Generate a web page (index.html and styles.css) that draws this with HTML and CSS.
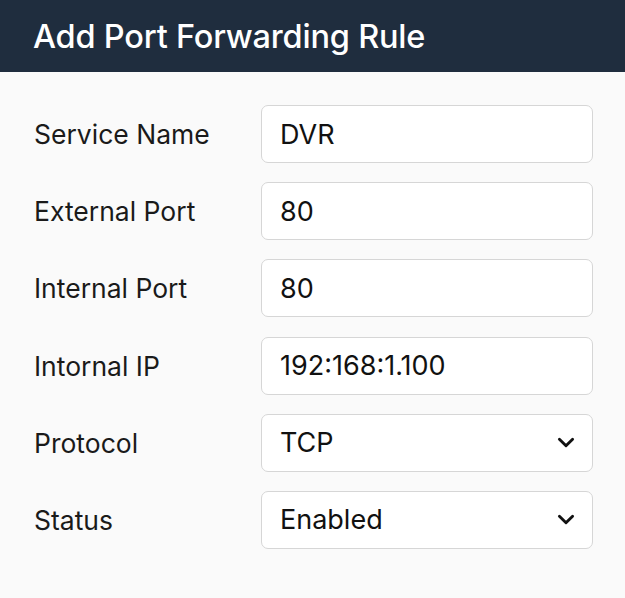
FILE: index.html
```html
<!DOCTYPE html>
<html>
<head>
<meta charset="utf-8">
<link rel="stylesheet" href="styles.css">
</head>
<body>
<header class="header"><h1 class="title">Add Port Forwarding Rule</h1></header>
<main class="form">
  <div class="label">Service Name</div><div class="field">DVR</div>
  <div class="label">External Port</div><div class="field">80</div>
  <div class="label">Internal Port</div><div class="field">80</div>
  <div class="label">Intornal IP</div><div class="field">192:168:1.100</div>
  <div class="label">Protocol</div><div class="field select"><span>TCP</span><svg class="chev" viewBox="0 0 16 10" width="18" height="11"><path d="M2 2 L8 8 L14 2" fill="none" stroke="#111" stroke-width="2.6" stroke-linecap="round" stroke-linejoin="round"/></svg></div>
  <div class="label">Status</div><div class="field select"><span>Enabled</span><svg class="chev" viewBox="0 0 16 10" width="18" height="11"><path d="M2 2 L8 8 L14 2" fill="none" stroke="#111" stroke-width="2.6" stroke-linecap="round" stroke-linejoin="round"/></svg></div>
</main>
</body>
</html>
```
FILE: styles.css
```css
html, body { margin: 0; padding: 0; }
body {
  background: #fafafa;
  font-family: Inter, "Noto Sans", sans-serif;
  color: #151515;
  width: 625px;
  height: 598px;
  overflow: hidden;
}
.header {
  background: #1f2d3e;
  height: 72px;
  display: flex;
  align-items: center;
  padding-left: 33px;
}
.title {
  margin: 0;
  color: #fff;
  font-size: 32.5px;
  font-weight: 500;
  letter-spacing: -0.2px;
}
.form {
  display: grid;
  grid-template-columns: 227px 332px;
  row-gap: 19.2px;
  padding: 33px 0 0 34px;
  align-items: center;
}
.label {
  font-size: 26.5px;
  color: #1a1a1a;
}
.field {
  height: 58px;
  box-sizing: border-box;
  border: 1px solid #d6d6d6;
  border-radius: 7px;
  background: #fff;
  display: flex;
  align-items: center;
  padding: 0 17px 0 18px;
  font-size: 27px;
  color: #111;
}
.select { justify-content: space-between; }
.chev { display: block; }
```
